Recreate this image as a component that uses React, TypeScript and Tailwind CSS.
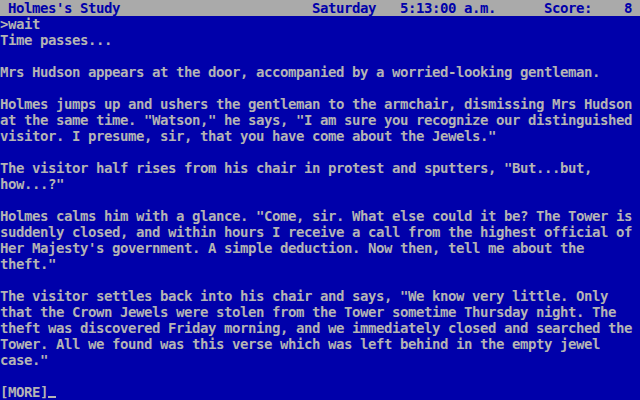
import React from "react";

const lines: string[] = [
  ">wait",
  "Time passes...",
  "",
  "Mrs Hudson appears at the door, accompanied by a worried-looking gentleman.",
  "",
  "Holmes jumps up and ushers the gentleman to the armchair, dismissing Mrs Hudson",
  "at the same time. \"Watson,\" he says, \"I am sure you recognize our distinguished",
  "visitor. I presume, sir, that you have come about the Jewels.\"",
  "",
  "The visitor half rises from his chair in protest and sputters, \"But...but,",
  "how...?\"",
  "",
  "Holmes calms him with a glance. \"Come, sir. What else could it be? The Tower is",
  "suddenly closed, and within hours I receive a call from the highest official of",
  "Her Majesty's government. A simple deduction. Now then, tell me about the",
  "theft.\"",
  "",
  "The visitor settles back into his chair and says, \"We know very little. Only",
  "that the Crown Jewels were stolen from the Tower sometime Thursday night. The",
  "theft was discovered Friday morning, and we immediately closed and searched the",
  "Tower. All we found was this verse which was left behind in the empty jewel",
  "case.\"",
  "",
];

const status =
  " Holmes's Study" +
  " ".repeat(24) +
  "Saturday" +
  "   " +
  "5:13:00 a.m." +
  "      " +
  "Score:" +
  "    " +
  "8 ";

export default function App() {
  return (
    <div
      className="w-[640px] h-[400px] overflow-hidden bg-[#0000aa] text-[#b4b4b4] text-[14px] leading-4 tracking-[-0.43px] font-bold"
      style={{ fontFamily: '"DejaVu Sans Mono", "Liberation Mono", monospace' }}
    >
      <div className="h-4 bg-[#aaaaaa] text-[#0000aa] whitespace-pre">{status}</div>
      {lines.map((l, i) => (
        <div key={i} className="h-4 whitespace-pre">
          {l}
        </div>
      ))}
      <div className="h-4 whitespace-pre flex">
        <span>[MORE]</span>
        <span className="relative w-2 h-4">
          <span className="absolute left-0 bottom-[2px] w-2 h-[2px] bg-[#b4b4b4]" />
        </span>
      </div>
    </div>
  );
}
